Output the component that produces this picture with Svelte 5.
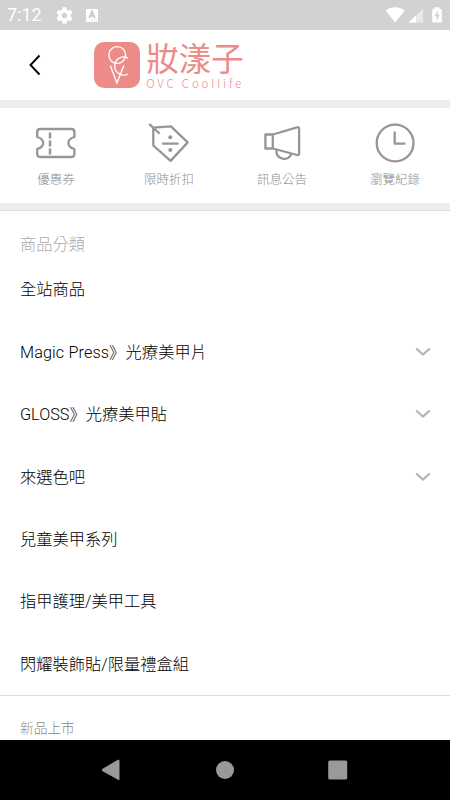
<script>
  const shortcuts = [
    { label: '優惠券', icon: 'ticket' },
    { label: '限時折扣', icon: 'tag' },
    { label: '訊息公告', icon: 'megaphone' },
    { label: '瀏覽紀錄', icon: 'clock' }
  ];
  const categories = [
    { name: '全站商品' },
    { name: 'Magic Press》光療美甲片', more: true, wide: true },
    { name: 'GLOSS》光療美甲貼', more: true },
    { name: '來選色吧', more: true },
    { name: '兒童美甲系列' },
    { name: '指甲護理/美甲工具' },
    { name: '閃耀裝飾貼/限量禮盒組' }
  ];
</script>

<div class="screen">
  <div class="status">
    <span class="time">7:12</span>
    <svg class="gear" width="17" height="17" viewBox="2 2 20 20" fill="#fff"><path d="M19.14 12.94c.04-.3.06-.61.06-.94s-.02-.64-.07-.94l2.03-1.58a.5.5 0 0 0 .12-.61l-1.92-3.32a.5.5 0 0 0-.59-.22l-2.39.96a7 7 0 0 0-1.62-.94l-.36-2.54A.5.5 0 0 0 13.92 2.4h-3.84a.5.5 0 0 0-.47.41l-.36 2.54c-.59.24-1.13.57-1.62.94l-2.39-.96a.5.5 0 0 0-.59.22L2.74 8.87a.5.5 0 0 0 .12.61l2.03 1.58c-.05.3-.09.63-.09.94s.02.64.07.94l-2.03 1.58a.5.5 0 0 0-.12.61l1.92 3.32c.12.22.37.29.59.22l2.39-.96c.5.38 1.03.7 1.62.94l.36 2.54c.05.24.24.41.48.41h3.84c.24 0 .44-.17.47-.41l.36-2.54c.59-.24 1.13-.56 1.62-.94l2.39.96c.22.08.47 0 .59-.22l1.92-3.32a.5.5 0 0 0-.12-.61zM12 15.3a3.3 3.3 0 1 1 0-6.6 3.3 3.3 0 0 1 0 6.6z" /></svg>
    <svg class="keyboard" width="12" height="13" viewBox="0 0 12 13"><rect width="12" height="13" rx="1" fill="#fff" /><path d="M3.2 9 6 2.7 8.8 9M4.2 7h3.6" fill="none" stroke="#c6c6c6" stroke-width="1.7" /><path d="M6 11h1m1 0h1m1 0h1" stroke="#d2d2d2" /></svg>
    <svg class="radio" width="58" height="18" viewBox="0 0 58 18">
      <path d="M.6 4.5C6.3.2 14.1.2 19.8 4.5L10.2 16.5Z" fill="#fff" />
      <path d="M38 3v13.5H23.5Z" fill="#e8e8e8" /><path d="M31 9.5v7h-7.5Z" fill="#fff" />
      <path d="M49.5 1.2h5v1.7h1.3q1 0 1 1v11.6q0 1-1 1h-7.6q-1 0-1-1V3.9q0-1 1-1h1.3Z" fill="#fff" /><path d="m53 4.8-3.8 5.4h2.3v4.3L55 9h-2Z" fill="#d2d2d2" />
    </svg>
  </div>

  <header>
    <svg class="back" width="12" height="22" viewBox="0 0 12 22"><path d="M10.5 1.5 1.5 11l9 9.5" fill="none" stroke="#000" stroke-width="1.9" /></svg>
    <svg class="logo" width="46" height="46" viewBox="0 0 46 46"><rect width="46" height="46" rx="10" fill="#ed8b89" /><g fill="none" stroke="#fff" stroke-width="1.4"><circle cx="23.2" cy="13" r="8.4" /><path d="M34 16.1a9 9 0 1 0-.2 15.9M16.3 23.5l6.6 17.4 7-17.4" /></g></svg>
    <div class="brand"><div class="brand-name">妝漾子</div><div class="brand-en">OVC Coollife</div></div>
  </header>

  <nav class="shortcuts">
    {#each shortcuts as item}
      <div class="shortcut">
        <svg width="42" height="42" viewBox="0 0 42 42" fill="none" stroke="#969696" stroke-width="2.3" stroke-linecap="round" stroke-linejoin="round">
          {#if item.icon === 'ticket'}
            <path d="M5.2 7h31.2q3 0 3 3v5c-8 2.2-8 9.8 0 12v5q0 3-3 3H5.2q-3 0-3-3v-5c8-2.2 8-9.8 0-12v-5q0-3 3-3Z" />
            <path d="M15 10.5v6m0 2v6m0 2v6" stroke-width="2.5" stroke-linecap="butt" />
          {:else if item.icon === 'tag'}
            <path d="m1.9 2.6 9 8.4M5.3 5.7l17.6-1.3 16.8 16-17.1 18.5L5.3 23.5ZM15.1 21.7h14.6" />
            <circle cx="22.3" cy="15.2" r="2" fill="#969696" stroke="none" /><circle cx="22.3" cy="28.1" r="2" fill="#969696" stroke="none" />
          {:else if item.icon === 'megaphone'}
            <path d="M4.4 12.5h7.4v14H4.4ZM11.8 12.5l24.3-7.2q2-.5 2 1.5v24.7q0 2-2 1.5L11.8 26.5M15.3 28.5c0 9.2 11.5 11 14.7 4" />
          {:else}
            <circle cx="21.1" cy="21" r="18.4" /><path d="M20.7 10.5v11.2h9.8" />
          {/if}
        </svg>
        <span>{item.label}</span>
      </div>
    {/each}
  </nav>

  <section class="categories">
    <h2>商品分類</h2>
    {#each categories as item}
      <div class="row">
        <span class:wide={item.wide}>{item.name}</span>
        {#if item.more}
          <svg width="16" height="10" viewBox="0 0 16 10"><path d="m1.2 1.5 6.8 6 6.8-6" fill="none" stroke="#b5b5b5" stroke-width="2.3" /></svg>
        {/if}
      </div>
    {/each}
  </section>
  <section class="new">新品上市</section>

  <div class="navbar">
    <svg width="20" height="22" viewBox="0 0 20 22"><path d="M18 1.2v19.6L1.7 11.8q-1-.8 0-1.6L17 1.2Z" fill="#999" stroke="#999" stroke-linejoin="round" /></svg>
    <svg width="20" height="20" viewBox="0 0 20 20"><circle cx="10" cy="10" r="9" fill="#999" /></svg>
    <svg width="20" height="20" viewBox="0 0 20 20"><rect x=".2" y=".5" width="19" height="19" rx="1.5" fill="#999" /></svg>
  </div>
</div>

<style>
  .screen { box-sizing: border-box; width: 450px; height: 800px; overflow: hidden; display: flex; flex-direction: column; background: #fff; font-family: Roboto, "Noto Sans CJK TC", sans-serif; font-weight: 300; }
  svg { display: block; flex: none; }
  .status { height: 30px; flex: none; display: flex; align-items: center; background: #d2d2d2; color: #fff; }
  .time { width: 48px; padding-left: 7px; font-size: 18px; line-height: 32px; font-weight: 400; }
  .gear { margin-left: 1px; }
  .keyboard { margin-left: 13px; }
  .radio { margin-left: auto; margin-right: 7px; }
  header { height: 70px; flex: none; display: flex; align-items: center; }
  .back { margin-left: 29px; }
  .logo { margin-left: 53.3px; }
  .brand { margin-left: 6px; color: #ed8b89; white-space: nowrap; }
  .brand-name { font: 400 32.5px/36px "Noto Sans CJK TC", sans-serif; margin-top: -2px; }
  .brand-en { font: 300 11.5px/12px "Noto Sans CJK TC", sans-serif; letter-spacing: 2.85px; margin-top: 2px; }
  .shortcuts { height: 95px; flex: none; display: flex; border-top: 8px solid #eee; border-bottom: 7px solid #eee; margin-left: -1px; }
  .shortcut { width: 113px; flex: none; display: flex; flex-direction: column; align-items: center; padding-top: 14px; box-sizing: border-box; color: #8d8d8d; font-size: 12.5px; line-height: 18px; }
  .shortcut span { margin-top: 7px; padding-left: 1px; }
  .categories { height: 486px; flex: none; box-sizing: border-box; border-top: 1px solid #dcdcdc; border-bottom: 1px solid #dcdcdc; padding: 22px 19px 0 20px; }
  h2 { margin: 0; font-size: 16.25px; line-height: 24px; font-weight: 300; color: #aaa; }
  .row { height: 62.45px; display: flex; align-items: center; justify-content: space-between; font-size: 16.25px; color: #000; }
  .row svg { position: relative; top: 1px; }
  .wide { letter-spacing: .1px; }
  .new { height: 44px; flex: none; box-sizing: border-box; padding: 22px 20px 0; font-size: 13.7px; line-height: 20px; color: #888; }
  .navbar { height: 60px; flex: none; display: flex; align-items: center; background: #000; padding-left: 101px; gap: 93.5px; }
</style>
